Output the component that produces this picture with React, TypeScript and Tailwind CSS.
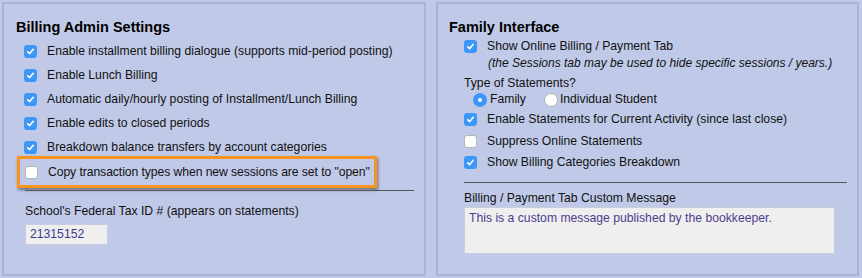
import React from 'react';

const font = { fontFamily: '"Liberation Sans", Arial, sans-serif' };

function Check({ checked }: { checked: boolean }) {
  if (checked) {
    return (
      <span className="inline-flex items-center justify-center w-[13px] h-[13px] rounded-[3px] bg-[#3c97f7] shrink-0">
        <svg width="9" height="9" viewBox="0 0 9 9">
          <path d="M1.8 4.8 L3.7 6.6 L7.2 2.3" fill="none" stroke="#fff" strokeWidth="1.6" strokeLinecap="round" strokeLinejoin="round" />
        </svg>
      </span>
    );
  }
  return <span className="inline-block w-[13px] h-[13px] rounded-[3px] bg-white border border-[#b4b4b4] shrink-0" />;
}

function Radio({ checked }: { checked: boolean }) {
  if (checked) {
    return (
      <span className="inline-flex items-center justify-center w-[14px] h-[14px] rounded-full bg-[#3c97f7] shrink-0">
        <span className="w-[4px] h-[4px] rounded-full bg-white" />
      </span>
    );
  }
  return <span className="inline-block w-[14px] h-[14px] rounded-full bg-white border border-[#b4b4b4] shrink-0" />;
}

function Row({ checked, label }: { checked: boolean; label: string }) {
  return (
    <div className="flex items-center h-[24px]">
      <Check checked={checked} />
      <span className="ml-[10px]">{label}</span>
    </div>
  );
}

export default function App() {
  const adminRows = [
    { checked: true, label: 'Enable installment billing dialogue (supports mid-period posting)' },
    { checked: true, label: 'Enable Lunch Billing' },
    { checked: true, label: 'Automatic daily/hourly posting of Installment/Lunch Billing' },
    { checked: true, label: 'Enable edits to closed periods' },
    { checked: true, label: 'Breakdown balance transfers by account categories' },
  ];

  return (
    <div style={font} className="w-[862px] h-[278px] bg-[#c0cae8] flex gap-[10px] p-[2px] pr-[3px] text-[12.2px] text-[#111]">
      <div className="w-[424px] h-[274px] border-[2px] border-[#aab4d3] pl-[12px] pt-[13px]">
        <h2 className="text-[14.5px] font-bold leading-[20px] text-black">Billing Admin Settings</h2>
        <div className="pl-[8px] mt-[2px]">
          {adminRows.map((r) => (
            <Row key={r.label} checked={r.checked} label={r.label} />
          ))}
        </div>
        <div className="ml-[1px] -mt-[3px] w-[360px] h-[32px] border-[3px] border-[#f7931e] shadow-[1px_2px_3px_rgba(0,0,0,0.45)] flex items-center pl-[5px]">
          <Check checked={false} />
          <span className="ml-[10px] whitespace-nowrap tracking-[-0.08px]">Copy transaction types when new sessions are set to "open"</span>
        </div>
        <div className="ml-[9px] mt-[2px] w-[389px] border-t border-[#555]" />
        <div className="ml-[9px] mt-[12px] leading-[16px]">School's Federal Tax ID # (appears on statements)</div>
        <div className="ml-[9px] mt-[5px] w-[83px] h-[21px] bg-[#efefef] border border-[#c9cede] pl-[4px] leading-[19px] text-[#3a3a8c]">
          21315152
        </div>
      </div>

      <div className="w-[423px] h-[274px] border-[2px] border-[#aab4d3] pl-[11px] pt-[13px]">
        <h2 className="text-[14.5px] font-bold leading-[20px] text-black">Family Interface</h2>
        <div className="pl-[15px] -mt-[1px]">
          <div className="flex items-center h-[20px]">
            <Check checked={true} />
            <span className="ml-[10px]">Show Online Billing / Payment Tab</span>
          </div>
          <div className="pl-[24px] italic text-[12px] leading-[15px]">
            (the Sessions tab may be used to hide specific sessions / years.)
          </div>
          <div className="mt-[4px] leading-[16px]">Type of Statements?</div>
          <div className="flex items-center h-[17px] pl-[9px]">
            <Radio checked={true} />
            <span className="ml-[3px]">Family</span>
            <span className="ml-[18px]" />
            <Radio checked={false} />
            <span className="ml-[2px]">Individual Student</span>
          </div>
          <div className="flex items-center h-[22px]">
            <Check checked={true} />
            <span className="ml-[10px]">Enable Statements for Current Activity (since last close)</span>
          </div>
          <div className="flex items-center h-[22px]">
            <Check checked={false} />
            <span className="ml-[10px]">Suppress Online Statements</span>
          </div>
          <div className="flex items-center h-[20px]">
            <Check checked={true} />
            <span className="ml-[10px]">Show Billing Categories Breakdown</span>
          </div>
          <div className="mt-[10px] w-[383px] border-t border-[#555]" />
          <div className="mt-[7px] leading-[16px]">Billing / Payment Tab Custom Message</div>
          <div className="mt-[1px] w-[371px] h-[47px] bg-[#efefef] border border-[#c9cede] px-[4px] pt-[2px] leading-[16px] text-[#4e3c8e]">
            This is a custom message published by the bookkeeper.
          </div>
        </div>
      </div>
    </div>
  );
}
